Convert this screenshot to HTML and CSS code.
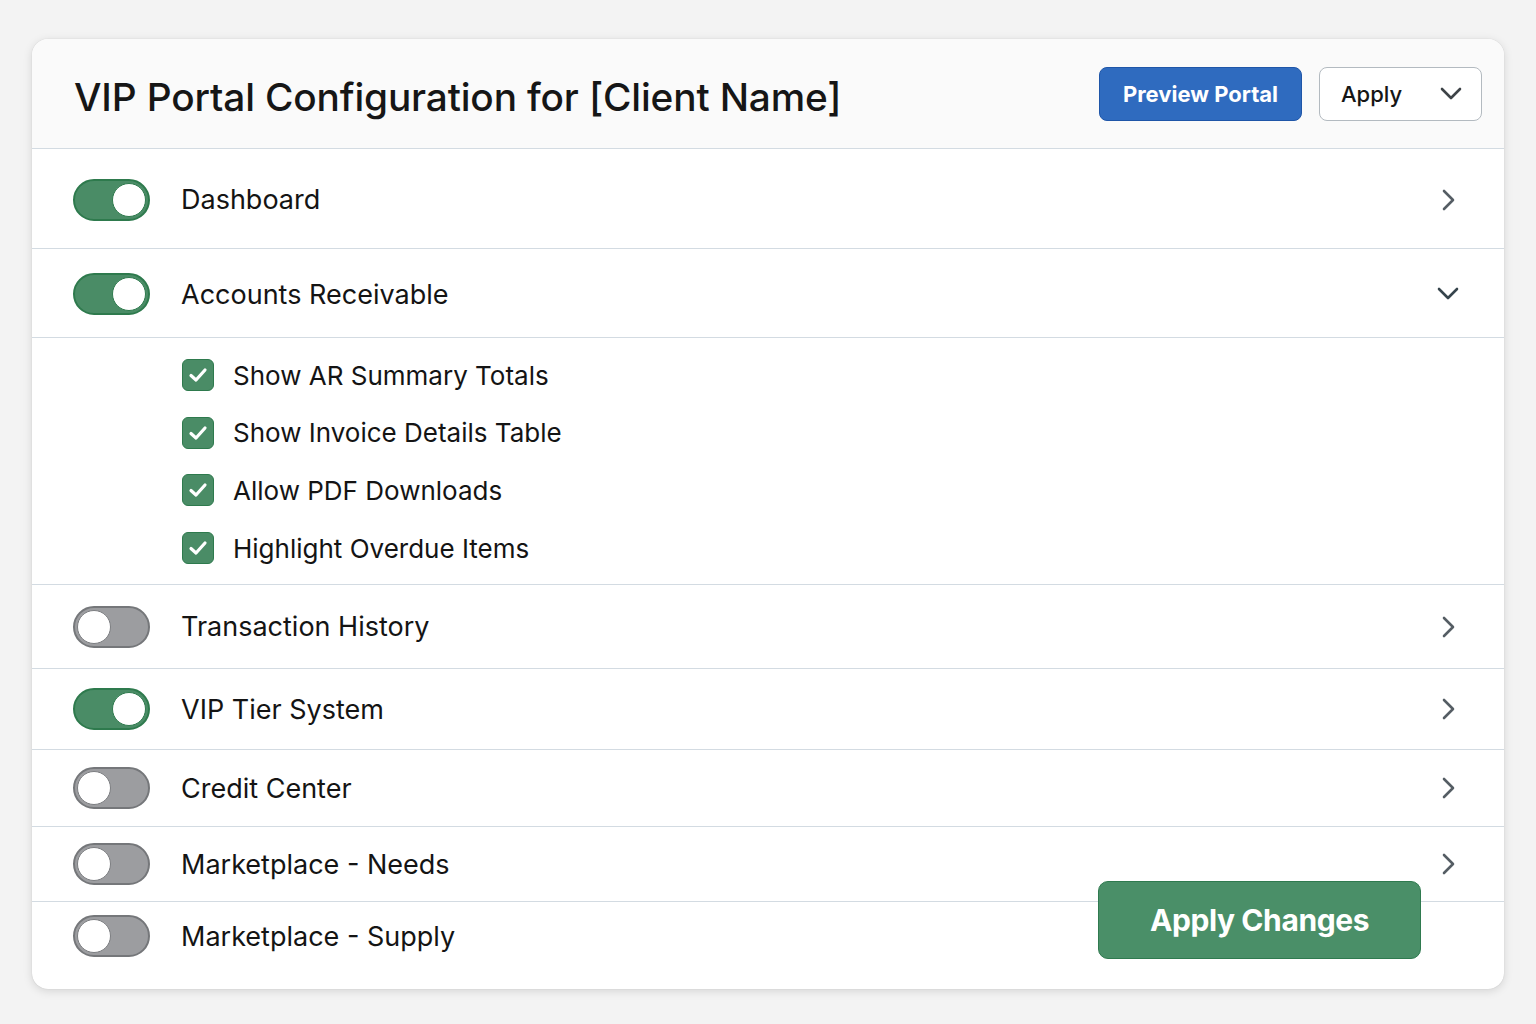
FILE: index.html
```html
<!DOCTYPE html>
<html>
<head>
<meta charset="utf-8">
<link rel="stylesheet" href="styles.css">
</head>
<body>
<div class="card">
  <header class="head">
    <h1 class="title">VIP Portal Configuration for [Client Name]</h1>
    <div class="actions">
      <button class="btn-primary">Preview Portal</button>
      <button class="btn-select">Apply
        <svg class="sel-chev" width="22" height="14" viewBox="0 0 22 14"><path d="M2 2 L11 11 L20 2" fill="none" stroke="#3d4347" stroke-width="2.6" stroke-linecap="round" stroke-linejoin="round"/></svg>
      </button>
    </div>
  </header>

  <div class="row r-dash">
    <span class="toggle on"><span class="knob"></span></span>
    <span class="label">Dashboard</span>
    <svg class="chev" width="14" height="22" viewBox="0 0 14 22"><path d="M3 2 L12 11 L3 20" fill="none" stroke="#555d64" stroke-width="2.6" stroke-linecap="round" stroke-linejoin="round"/></svg>
  </div>

  <div class="row r-ar">
    <span class="toggle on"><span class="knob"></span></span>
    <span class="label">Accounts Receivable</span>
    <svg class="chev chev-down" width="22" height="14" viewBox="0 0 22 14"><path d="M2 2 L11 11 L20 2" fill="none" stroke="#36444c" stroke-width="2.6" stroke-linecap="round" stroke-linejoin="round"/></svg>
  </div>

  <div class="sub">
    <div class="check-row"><span class="cb"><svg width="22" height="18" viewBox="0 0 22 18"><path d="M4 9.5 L9 14 L18 4" fill="none" stroke="#fff" stroke-width="3.2" stroke-linecap="round" stroke-linejoin="round"/></svg></span><span class="clabel">Show AR Summary Totals</span></div>
    <div class="check-row"><span class="cb"><svg width="22" height="18" viewBox="0 0 22 18"><path d="M4 9.5 L9 14 L18 4" fill="none" stroke="#fff" stroke-width="3.2" stroke-linecap="round" stroke-linejoin="round"/></svg></span><span class="clabel">Show Invoice Details Table</span></div>
    <div class="check-row"><span class="cb"><svg width="22" height="18" viewBox="0 0 22 18"><path d="M4 9.5 L9 14 L18 4" fill="none" stroke="#fff" stroke-width="3.2" stroke-linecap="round" stroke-linejoin="round"/></svg></span><span class="clabel">Allow PDF Downloads</span></div>
    <div class="check-row"><span class="cb"><svg width="22" height="18" viewBox="0 0 22 18"><path d="M4 9.5 L9 14 L18 4" fill="none" stroke="#fff" stroke-width="3.2" stroke-linecap="round" stroke-linejoin="round"/></svg></span><span class="clabel">Highlight Overdue Items</span></div>
  </div>

  <div class="row r-th">
    <span class="toggle"><span class="knob"></span></span>
    <span class="label">Transaction History</span>
    <svg class="chev" width="14" height="22" viewBox="0 0 14 22"><path d="M3 2 L12 11 L3 20" fill="none" stroke="#555d64" stroke-width="2.6" stroke-linecap="round" stroke-linejoin="round"/></svg>
  </div>

  <div class="row r-vip">
    <span class="toggle on"><span class="knob"></span></span>
    <span class="label">VIP Tier System</span>
    <svg class="chev" width="14" height="22" viewBox="0 0 14 22"><path d="M3 2 L12 11 L3 20" fill="none" stroke="#555d64" stroke-width="2.6" stroke-linecap="round" stroke-linejoin="round"/></svg>
  </div>

  <div class="row r-cc">
    <span class="toggle"><span class="knob"></span></span>
    <span class="label">Credit Center</span>
    <svg class="chev" width="14" height="22" viewBox="0 0 14 22"><path d="M3 2 L12 11 L3 20" fill="none" stroke="#555d64" stroke-width="2.6" stroke-linecap="round" stroke-linejoin="round"/></svg>
  </div>

  <div class="row r-mn">
    <span class="toggle"><span class="knob"></span></span>
    <span class="label">Marketplace - Needs</span>
    <svg class="chev" width="14" height="22" viewBox="0 0 14 22"><path d="M3 2 L12 11 L3 20" fill="none" stroke="#555d64" stroke-width="2.6" stroke-linecap="round" stroke-linejoin="round"/></svg>
  </div>

  <div class="row r-ms last">
    <span class="toggle"><span class="knob"></span></span>
    <span class="label">Marketplace - Supply</span>
  </div>

  <button class="btn-apply">Apply Changes</button>
</div>
</body>
</html>
```

FILE: styles.css
```css
* { box-sizing: border-box; }
html, body { margin: 0; padding: 0; }
body {
  background: #f3f3f3;
  font-family: Inter, "Noto Sans", "Liberation Sans", sans-serif;
  color: #141414;
  width: 1536px;
  height: 1024px;
  overflow: hidden;
}
.card {
  position: relative;
  margin: 39px 0 0 32px;
  width: 1472px;
  height: 950px;
  background: #ffffff;
  border-radius: 16px;
  box-shadow: 0 2px 10px rgba(0,0,0,0.13), 0 0 1px rgba(0,0,0,0.2);
  overflow: hidden;
}
.head {
  height: 110px;
  background: #fafafa;
  border-bottom: 1px solid #d3dbe2;
  display: flex;
  align-items: center;
  justify-content: space-between;
  padding: 0 22px 0 42px;
}
.title {
  margin: 6px 0 0 0;
  font-size: 38.8px;
  font-weight: 500;
  letter-spacing: -0.15px;
  color: #161616;
}
.actions { display: flex; gap: 17px; align-items: center; }
.btn-primary {
  width: 203px;
  height: 54px;
  background: #2f6bbf;
  border: 1px solid #1f56a8;
  border-radius: 8px;
  color: #fff;
  font-family: inherit;
  font-size: 22px;
  font-weight: 700;
}
.btn-select {
  width: 163px;
  height: 54px;
  background: #fff;
  border: 1px solid #b3bac0;
  border-radius: 8px;
  display: flex;
  align-items: center;
  justify-content: space-between;
  padding: 0 19px 0 21px;
  font-family: inherit;
  font-size: 22px;
  font-weight: 500;
  color: #161616;
}
.row {
  display: flex;
  align-items: center;
  padding: 0 49px 0 41px;
  border-bottom: 1px solid #d3dbe2;
}
.row.last { border-bottom: none; }
.r-dash { height: 100px; padding-top: 2px; }
.r-ar { height: 89px; padding-top: 2px; }
.r-th { height: 84px; }
.r-vip { height: 81px; padding-top: 0; }
.r-cc { height: 77px; }
.r-mn { height: 75px; }
.r-ms { height: 88px; padding-bottom: 20px; }
.label {
  flex: 1;
  font-size: 27px;
  font-weight: 400;
  margin-left: 31px;
  color: #141414;
}
.chev { flex: none; }
.chev-down { margin-right: -4px; }
.toggle {
  flex: none;
  position: relative;
  width: 77px;
  height: 42px;
  border-radius: 21px;
  background: #9c9da0;
  border: 2px solid #75777a;
}
.toggle .knob {
  position: absolute;
  top: 2px;
  left: 2px;
  width: 34px;
  height: 34px;
  border-radius: 50%;
  background: #fff;
  border: 1.5px solid #7c7e81;
}
.toggle.on { background: #4a8c66; border-color: #2e7a4d; }
.toggle.on .knob { left: auto; right: 2px; border-color: #2e7a4d; }
.sub {
  display: flex;
  flex-direction: column;
  gap: 25.7px;
  padding: 21px 0 19px 150px;
  border-bottom: 1px solid #d3dbe2;
  height: 247px;
}
.check-row { display: flex; align-items: center; height: 32px; }
.cb {
  flex: none;
  width: 32px;
  height: 32px;
  border-radius: 6px;
  background: #4a8c66;
  border: 1px solid #2e7a4d;
  display: flex;
  align-items: center;
  justify-content: center;
}
.clabel { margin-left: 19px; font-size: 26px; color: #141414; }
.btn-apply {
  position: absolute;
  right: 83px;
  bottom: 30px;
  width: 323px;
  height: 78px;
  background: #4a8f68;
  border: 1px solid #2f7a4f;
  border-radius: 10px;
  color: #fff;
  font-family: inherit;
  font-size: 30px;
  font-weight: 700;
  letter-spacing: -0.4px;
}
```
